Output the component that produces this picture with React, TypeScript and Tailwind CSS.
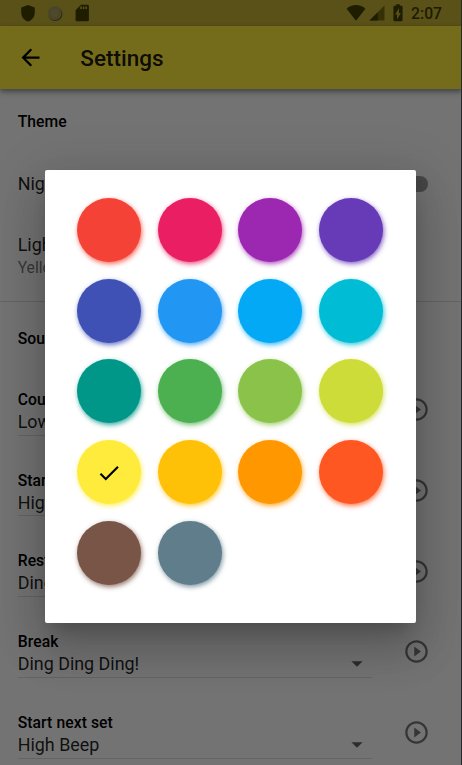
import React from "react";

const swatches = [
  "#f44336", "#e91e63", "#9c27b0", "#673ab7",
  "#3f51b5", "#2196f3", "#03a9f4", "#00bcd4",
  "#009688", "#4caf50", "#8bc34a", "#cddc39",
  "#ffeb3b", "#ffc107", "#ff9800", "#ff5722",
  "#795548", "#607d8b",
];

const selected = "#ffeb3b";

const sounds = [
  { label: "Countdown", value: "Low Beep" },
  { label: "Start", value: "High Beep" },
  { label: "Rest", value: "Ding" },
  { label: "Break", value: "Ding Ding Ding!" },
  { label: "Start next set", value: "High Beep" },
];

function StatusBar() {
  return (
    <div className="flex h-[26px] shrink-0 items-center bg-[#c2b033] pr-[20px] pl-[17px] text-[#433f00]">
      <svg className="h-[22px] w-[22px]" viewBox="0 0 24 24" fill="currentColor">
        <path d="M12 3.2 4.6 6v5.4c0 4.600 3.100 8.700 7.400 9.900 4.300-1.200 7.400-5.300 7.400-9.900V6z" />
      </svg>
      <svg className="ml-[6px] h-[18px] w-[18px]" viewBox="0 0 18 18">
        <circle cx="10.2" cy="9.8" r="7.2" fill="#605522" />
        <circle cx="9.6" cy="9" r="7" fill="#aaa05c" />
        <circle cx="9.6" cy="9" r="5.2" fill="none" stroke="#9a8f50" strokeWidth="1" />
      </svg>
      <svg className="ml-2 h-[22px] w-[22px]" viewBox="0 0 24 24" fill="currentColor">
        <path d="M18 3h-7L5 9v10.500q0 1.500 1.500 1.500H18q1.500 0 1.500-1.500v-15Q19.500 3 18 3zm-6.200 4.500H10V4.800h1.800zm2.800 0h-1.800V4.800h1.800zm2.800 0h-1.800V4.800h1.800z" />
      </svg>
      <div className="flex-1" />
      <svg className="h-[20px] w-[20px]" viewBox="0 0 20 20" fill="currentColor">
        <path d="M10 17.700.6 5.800C3.200 3.300 6.400 2.100 10 2.100s6.800 1.200 9.400 3.700z" />
      </svg>
      <svg className="ml-[2px] h-[18px] w-[18px]" viewBox="0 0 18 18">
        <path d="M16.500 1.500v15h-15z" fill="#756c0a" />
        <path d="M9.800 8.200v8.300H1.500z" fill="currentColor" />
      </svg>
      <svg className="ml-px h-[22px] w-[22px]" viewBox="0 0 24 24" fill="currentColor">
        <path d="M15.670 4H14V2.500h-4V4H8.330C7.600 4 7 4.600 7 5.330v14.330C7 20.400 7.600 21 8.330 21h7.330c.74 0 1.340-.6 1.340-1.330V5.330C17 4.600 16.400 4 15.670 4zM11 19v-5.500H9L13 6.500v5.500h2L11 19z" />
      </svg>
      <span className="ml-[2px] pt-[2px] text-[15.700px] leading-[24px] font-medium">2:07</span>
    </div>
  );
}

function AppBar() {
  return (
    <header className="relative flex h-[63px] shrink-0 items-center bg-[#ffeb3b] pl-[17px] shadow-[0_2px_5px_rgba(0,0,0,0.35),0_4px_6px_rgba(0,0,0,0.14)]">
      <svg className="h-[27px] w-[27px]" viewBox="0 0 24 24">
        <path d="M20 11H7.830l5.590-5.590L12 4l-8 8 8 8 1.410-1.410L7.830 13H20v-2z" />
      </svg>
      <h1 className="ml-[36.300px] pt-px text-[22.500px] leading-7 font-medium text-black/90">Settings</h1>
    </header>
  );
}

function SoundRow({ label, value }: { label: string; value: string }) {
  return (
    <div className="flex h-[80.800px] items-start">
      <div className="h-[46.700px] w-[354px] border-b border-black/12">
        <div className="h-[22px] text-[15.700px] leading-[22px] font-medium tracking-[0.080px] text-black">{label}</div>
        <div className="flex h-[22px] items-center justify-between pr-[8.500px]">
          <span className="text-[17.900px] leading-[22px] text-black/87">{value}</span>
          <svg className="h-[6px] w-[12px]" viewBox="0 0 12 6" fill="#616161">
            <path d="M.4.2h11.200L6 5.800z" />
          </svg>
        </div>
      </div>
      <svg className="mt-[7.200px] ml-[31px] h-[27px] w-[27px]" viewBox="0 0 24 24" fill="#757575">
        <path d="M10 16.500l6-4.500-6-4.500v9zM12 2C6.480 2 2 6.480 2 12s4.480 10 10 10 10-4.480 10-10S17.520 2 12 2zm0 18c-4.410 0-8-3.590-8-8s3.590-8 8-8 8 3.590 8 8-3.590 8-8 8z" />
      </svg>
    </div>
  );
}

function ColorDialog() {
  return (
    <div className="mt-[27px] ml-[-2px] grid h-[453px] w-[371px] grid-cols-[repeat(4,64px)] content-start gap-x-[16.800px] gap-y-[16.800px] rounded-[2px] bg-white pt-[28.300px] pl-[32.300px] shadow-[0_12px_17px_-8px_rgba(0,0,0,0.2),0_27px_43px_3px_rgba(0,0,0,0.14),0_10px_52px_9px_rgba(0,0,0,0.12)]">
      {swatches.map((color) => (
        <div
          key={color}
          className="flex h-[64px] w-[64px] items-center justify-center rounded-full"
          style={{ backgroundColor: color, boxShadow: `1px 2px 5px ${color}cc` }}
        >
          {color === selected && (
            <svg className="mt-px h-[26px] w-[26px]" viewBox="0 0 24 24">
              <path d="M9 16.170 4.830 12l-1.420 1.410L9 19 21 7l-1.410-1.410z" />
            </svg>
          )}
        </div>
      ))}
    </div>
  );
}

export default function App() {
  return (
    <div className="relative h-[765px] w-[462px] overflow-hidden bg-[#fafafa] font-['Roboto','Noto_Sans',sans-serif]">
      <div className="flex h-full flex-col">
        <StatusBar />
        <AppBar />
        <main>
          <section className="h-[213px] border-b border-black/12 pr-[34px] pl-[17.700px] text-[17.970px]">
            <h2 className="pt-[22px] text-[15.700px] leading-[22px] font-medium tracking-[0.080px]">Theme</h2>
            <div className="mt-[40px] flex h-[22px] items-center justify-between">
              <span className="text-black/87">Night mode</span>
              <span className="h-4 w-10 rounded-full bg-black/38" />
            </div>
            <div className="mt-[39px] leading-[22px] text-black/87">Light theme color</div>
            <div className="mt-[1px] text-[15.700px] leading-[22px] text-black/54">Yellow</div>
          </section>
          <section className="pl-[17.700px]">
            <h2 className="pt-[26px] text-[15.700px] leading-[22px] font-medium tracking-[0.080px]">Sounds</h2>
            <div className="pt-[38.900px]">
              {sounds.map((sound) => (
                <SoundRow key={sound.label} {...sound} />
              ))}
            </div>
          </section>
        </main>
      </div>
      <div className="absolute inset-0 flex items-center justify-center bg-black/54">
        <ColorDialog />
      </div>
      <div className="absolute inset-y-0 right-0 w-px bg-[#25292b]" />
    </div>
  );
}
